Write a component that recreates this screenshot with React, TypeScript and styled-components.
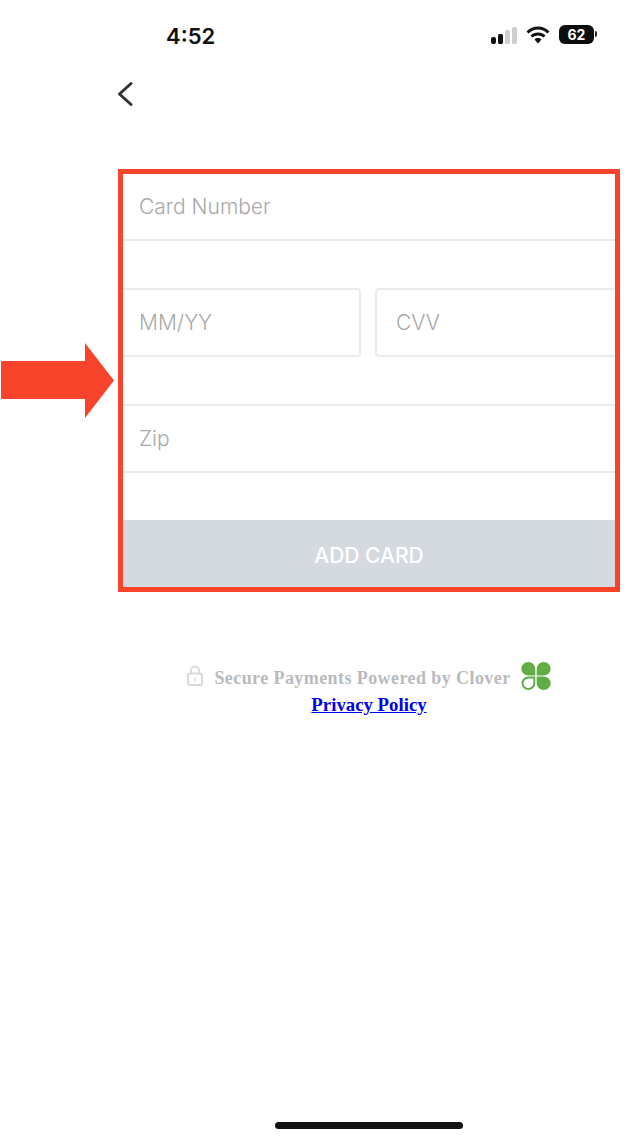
import {FC} from 'react';
import styled, {createGlobalStyle} from 'styled-components';

const Global = createGlobalStyle`
    html, body {
        margin: 0;
        padding: 0;
        background: #fff;
    }
`;

const Page = styled.div`
    width: 632px;
    height: 1140px;
    display: flex;
    flex-direction: column;
    overflow: hidden;
    background: #fff;
    font-family: Inter, "Liberation Sans", sans-serif;
`;

const StatusBar = styled.div`
    height: 60px;
    display: flex;
    align-items: flex-start;
    justify-content: space-between;
    padding: 0 38px 0 166px;
    box-sizing: border-box;
`;

const Time = styled.span`
    margin-top: 23px;
    font-size: 22px;
    line-height: 26px;
    font-weight: 600;
    color: #111;
`;

const StatusIcons = styled.div`
    display: flex;
    align-items: flex-start;
    margin-top: 25px;
`;

const Signal = styled.svg`
    width: 27px;
    height: 19px;
    margin-right: 8px;
`;

const Wifi = styled.svg`
    width: 24px;
    height: 19px;
    margin-right: 9px;
`;

const Battery = styled.div`
    position: relative;
    width: 35px;
    height: 19px;
    border-radius: 6px;
    background: #0d0d0d;
    color: #fff;
    font-size: 14px;
    font-weight: 700;
    line-height: 20px;
    text-align: center;

    &::after {
        content: '';
        position: absolute;
        right: -3px;
        top: 6px;
        width: 2px;
        height: 6px;
        border-radius: 0 2px 2px 0;
        background: #222;
    }
`;

const BackRow = styled.div`
    height: 109px;
    padding: 21px 0 0 117px;
    box-sizing: border-box;
`;

const Chevron = styled.svg`
    display: block;
    width: 18px;
    height: 26px;
`;

const FormRow = styled.div`
    display: flex;
    align-items: center;
`;

const Arrow = styled.svg`
    flex: none;
    width: 114px;
    height: 75px;
    margin-right: 4px;
`;

const Frame = styled.div`
    flex: none;
    width: 502px;
    height: 423px;
    box-sizing: border-box;
    border: 5px solid #f8442b;
    display: flex;
    flex-direction: column;
    overflow: hidden;
`;

const LineInput = styled.input<{$top?: boolean}>`
    display: block;
    width: 100%;
    height: ${p => (p.$top ? 69 : 67)}px;
    box-sizing: border-box;
    flex: none;
    border: 0;
    border-bottom: 2px solid #e9ebec;
    border-top: ${p => (p.$top ? '2px solid #e9ebec' : '0')};
    outline: 0;
    padding: 0 16px;
    background: #fff;
    font-family: Inter, "Liberation Sans", sans-serif;
    font-size: 21px;
    font-weight: 300;
    color: #333;

    &::placeholder {
        color: #a9a9a9;
        opacity: 1;
    }
`;

const SplitRow = styled.div`
    display: flex;
    gap: 14px;
    margin: 47px 0 47px;
`;

const BoxInput = styled(LineInput)<{$side: 'left' | 'right'}>`
    width: auto;
    min-width: 0;
    height: 69px;
    border: 2px solid #e9ebec;
    border-left-width: ${p => (p.$side === 'left' ? 0 : 2)}px;
    border-right-width: ${p => (p.$side === 'right' ? 0 : 2)}px;
    border-radius: ${p => (p.$side === 'left' ? '0 4px 4px 0' : '4px 0 0 4px')};
    padding-left: ${p => (p.$side === 'left' ? 16 : 19)}px;
    flex: ${p => (p.$side === 'left' ? '0 0 238px' : '1 1 0')};
`;

const AddButton = styled.button`
    flex: none;
    margin-top: 47px;
    height: 67px;
    border: 0;
    padding: 4px 0 0;
    background: #d4dae0;
    color: #fff;
    font-family: Inter, "Liberation Sans", sans-serif;
    font-size: 21px;
    font-weight: 500;
`;

const Footer = styled.div`
    width: 502px;
    margin: 71px 0 0 118px;
    display: flex;
    flex-direction: column;
    align-items: center;
    font-family: "Liberation Serif", serif;
    font-weight: 700;
`;

const SecureRow = styled.div`
    display: flex;
    align-items: center;
    height: 30px;
`;

const SecureText = styled.span`
    margin: 0 10px 0 11px;
    font-size: 18px;
    letter-spacing: 0.42px;
    color: #b9bbbd;
`;

const LockIcon = styled.svg`
    width: 16px;
    height: 21px;
    margin-bottom: 5px;
`;

const CloverIcon = styled.svg`
    width: 30px;
    height: 28px;
    margin-bottom: 4px;
`;

const PolicyLink = styled.a`
    font-size: 18.8px;
    line-height: 21px;
    margin-top: 1px;
    color: #0000ee;
    text-decoration: underline;
`;

const HomeBar = styled.div`
    width: 188px;
    height: 7px;
    border-radius: 4px;
    background: #111;
    margin: auto 0 11px 275px;
`;

const App: FC = () => {
    return (
        <Page>
            <Global />
            <StatusBar>
                <Time>4:52</Time>
                <StatusIcons>
                    <Signal viewBox="0 0 27 19">
                        <rect x="0" y="12" width="5" height="7" rx="2" fill="#111" />
                        <rect x="7" y="9" width="5" height="10" rx="1.5" fill="#111" />
                        <rect x="14" y="5" width="5" height="14" rx="1.5" fill="#cfcfcf" />
                        <rect x="21" y="2" width="5" height="17" rx="1.5" fill="#cfcfcf" />
                    </Signal>
                    <Wifi viewBox="0 0 24 19">
                        <path d="M1.5 7.5C7.5 1.5 16.5 1.5 22.5 7.5" fill="none" stroke="#111" strokeWidth="3" />
                        <path d="M5.5 11.5C9 8 15 8 18.5 11.5" fill="none" stroke="#111" strokeWidth="3" />
                        <path d="M8.5 14.5C10.5 12.6 13.5 12.6 15.5 14.5L12 18.5Z" fill="#111" />
                    </Wifi>
                    <Battery>62</Battery>
                </StatusIcons>
            </StatusBar>

            <BackRow>
                <Chevron viewBox="0 0 18 26">
                    <path d="M14 2.5L2.5 13L14 23.5" fill="none" stroke="#333" strokeWidth="3" strokeLinecap="round" strokeLinejoin="round" />
                </Chevron>
            </BackRow>

            <FormRow>
                <Arrow viewBox="0 0 114 75">
                    <path d="M1 18H85V0L114 37.5L85 75V56H1Z" fill="#f8442b" />
                </Arrow>
                <Frame>
                    <LineInput placeholder="Card Number" />
                    <SplitRow>
                        <BoxInput $side="left" placeholder="MM/YY" />
                        <BoxInput $side="right" placeholder="CVV" />
                    </SplitRow>
                    <LineInput $top placeholder="Zip" />
                    <AddButton>ADD CARD</AddButton>
                </Frame>
            </FormRow>

            <Footer>
                <SecureRow>
                    <LockIcon viewBox="0 0 16 21">
                        <path d="M4 9V5.5a4 4 0 0 1 8 0V9" fill="none" stroke="#d9dadb" strokeWidth="1.8" />
                        <rect x="1" y="8.5" width="14" height="11.5" rx="2" fill="none" stroke="#d9dadb" strokeWidth="2" />
                        <rect x="7.2" y="12.5" width="1.6" height="3.5" fill="#d9dadb" />
                    </LockIcon>
                    <SecureText>Secure Payments Powered by Clover</SecureText>
                    <CloverIcon viewBox="0 0 30 28">
                        <path d="M14.3 13.4H7.3A7 6.7 0 1 1 14.3 6.7Z" fill="#62ad45" />
                        <path d="M15.7 13.4V6.7A7 6.7 0 1 1 22.7 13.4Z" fill="#62ad45" />
                        <path d="M15.7 14.6H22.7A7 6.7 0 1 1 15.7 21.3Z" fill="#62ad45" />
                        <path d="M13.3 15.6H7.3A5.9 5.7 0 1 0 13.3 21.3Z" fill="none" stroke="#62ad45" strokeWidth="2" />
                    </CloverIcon>
                </SecureRow>
                <PolicyLink href="#">Privacy Policy</PolicyLink>
            </Footer>

            <HomeBar />
        </Page>
    );
};

export default App;
